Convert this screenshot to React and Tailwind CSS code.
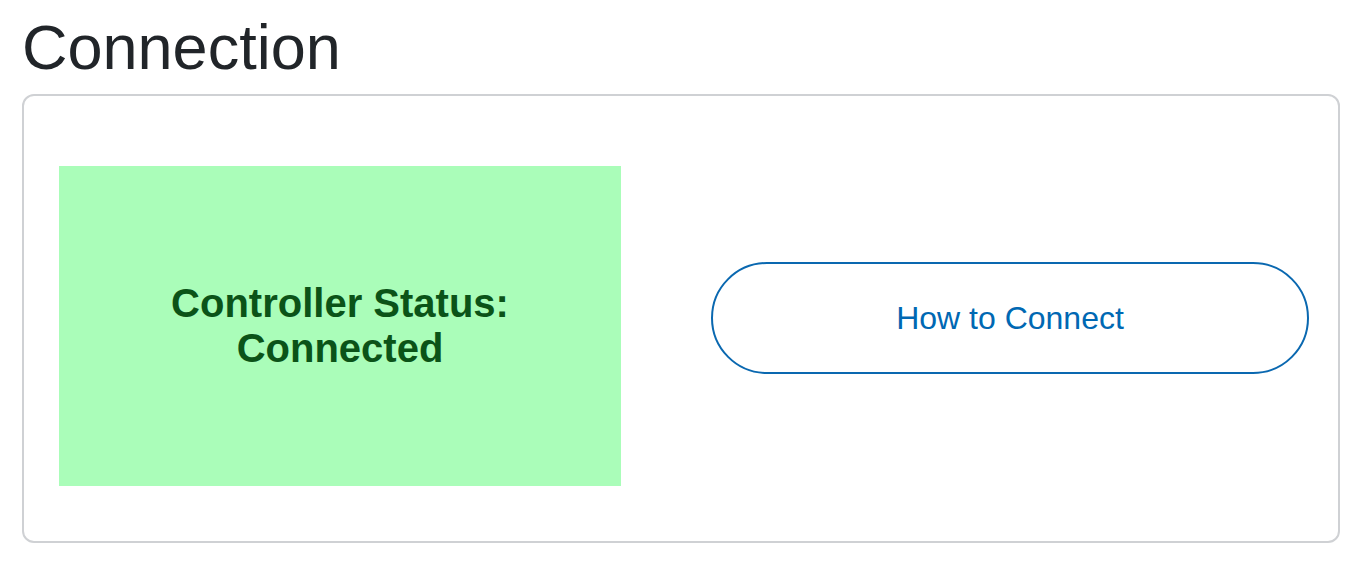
import React from 'react';

export default function App() {
  return (
    <div className="min-h-screen bg-white pl-[22px] pr-[12px] font-['Liberation_Sans',Arial,sans-serif]">
      <h1 className="pt-[15px] text-[63px] leading-[64px] text-[#212529]">Connection</h1>

      {/* Connection card */}
      <div className="mt-[15px] w-[1318px] h-[449px] rounded-[12px] border-2 border-[#cfd1d4] pl-[35px] pt-[70px]">
        <div className="flex items-start">
          <div className="w-[562px] h-[320px] bg-[#aafdb9] flex items-center justify-center">
            <p className="text-center font-bold text-[40px] leading-[45px] text-[#0b5318]">
              Controller Status:
              <br />
              Connected
            </p>
          </div>
          <button className="ml-[90px] mt-[96px] w-[598px] h-[112px] rounded-full border-2 border-[#0a68b0] bg-white text-[32px] text-[#0068b3] flex items-center justify-center">
            How to Connect
          </button>
        </div>
      </div>
    </div>
  );
}
